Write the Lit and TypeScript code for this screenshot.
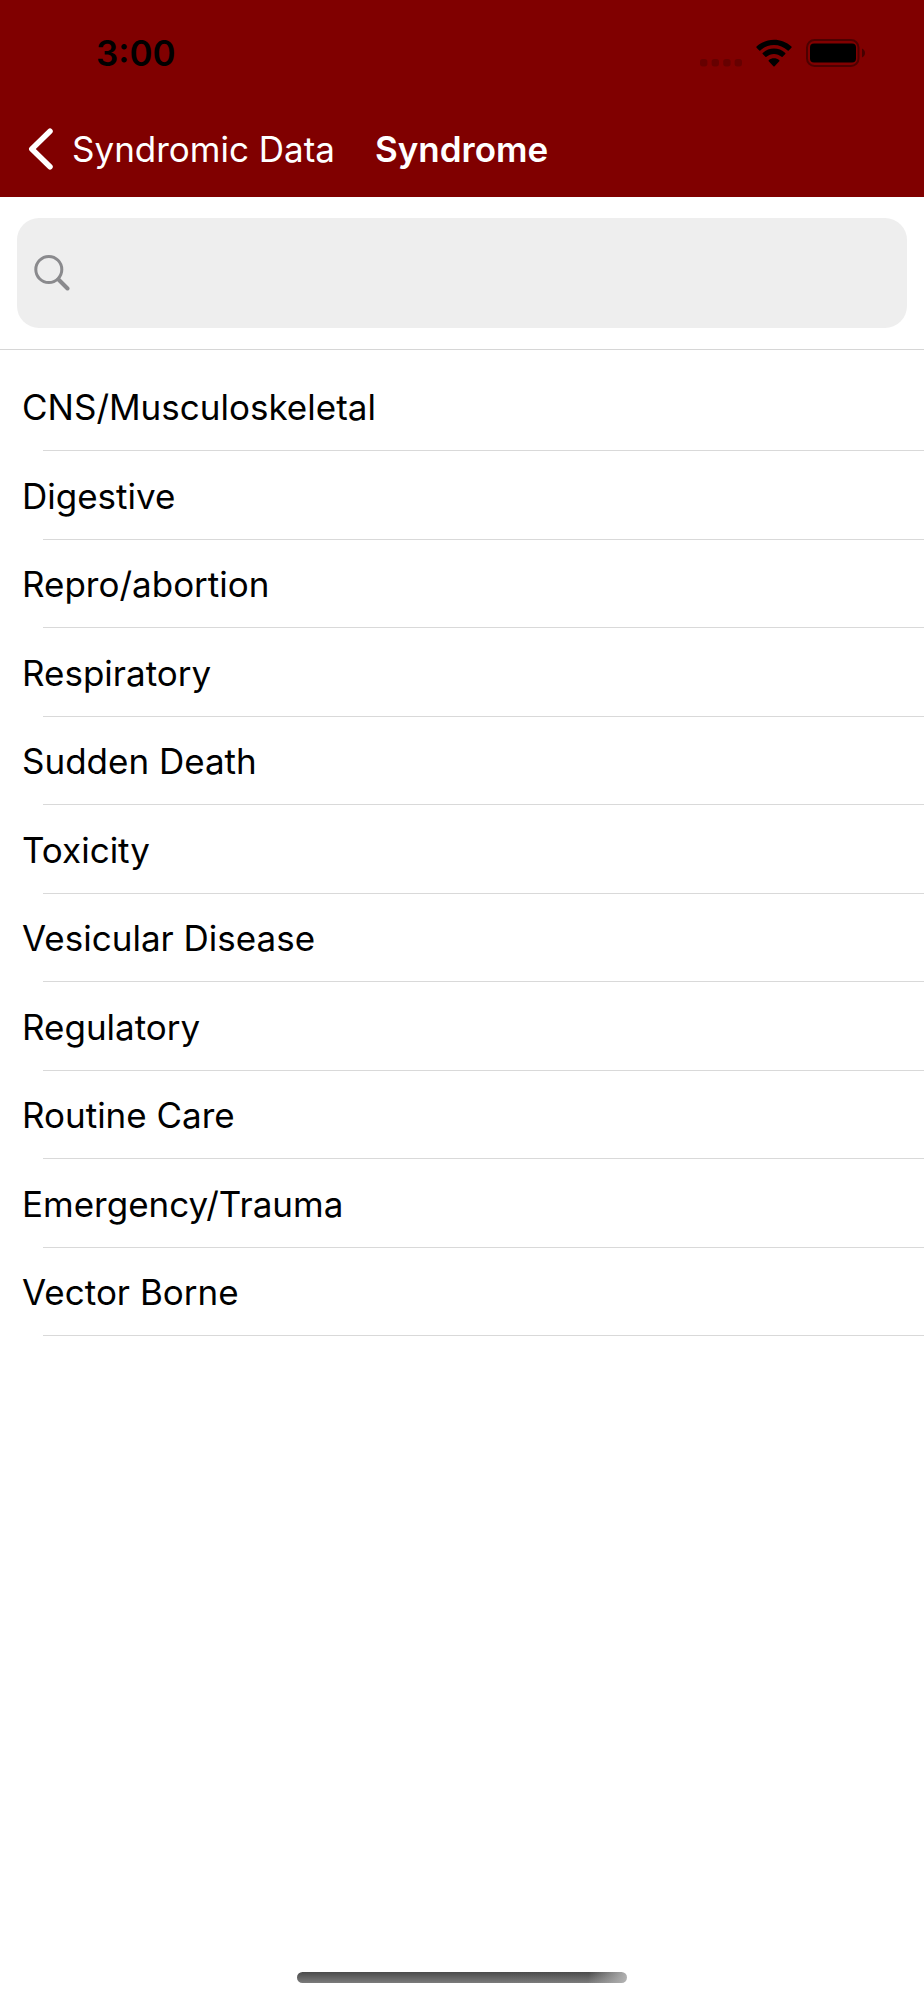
import { LitElement, html, css } from "lit";
import { customElement, state } from "lit/decorators.js";

const SYNDROMES = [
  "CNS/Musculoskeletal",
  "Digestive",
  "Repro/abortion",
  "Respiratory",
  "Sudden Death",
  "Toxicity",
  "Vesicular Disease",
  "Regulatory",
  "Routine Care",
  "Emergency/Trauma",
  "Vector Borne",
];

@customElement("status-bar")
class StatusBar extends LitElement {
  static styles = css`
    :host {
      display: flex;
      align-items: center;
      justify-content: space-between;
      height: 105px;
      padding: 0 59px 0 96px;
      color: #000;
    }
    .time {
      font-size: 35px;
      line-height: 44px;
      font-weight: 600;
    }
    .icons {
      display: flex;
      align-items: center;
      gap: 14px;
    }
    svg {
      display: block;
    }
  `;

  render() {
    return html`
      <span class="time">3:00</span>
      <div class="icons">
        <svg width="42" height="28" viewBox="0 0 42 28" aria-hidden="true">
          <g fill="#000" fill-opacity="0.2">
            <rect x="0" y="20" width="7.4" height="7.4" rx="2.6" />
            <rect x="11.6" y="20" width="7.4" height="7.4" rx="2.6" />
            <rect x="23.2" y="20" width="7.4" height="7.4" rx="2.6" />
            <rect x="34.6" y="20" width="7.4" height="7.4" rx="2.6" />
          </g>
        </svg>
        <svg width="36" height="28" viewBox="1 0 34 27" role="img" aria-label="Wi-Fi">
          <path d="M18 5.7c4.9 0 9.600 1.900 13.200 5.400.3.300.7.300 1 0l2.600-2.700c.3-.3.300-.8 0-1.100C25.500-1.500 10.500-1.500 1.200 7.300c-.3.300-.3.800 0 1.100l2.600 2.700c.3.300.7.300 1 0C8.400 7.600 13.100 5.700 18 5.700z" />
          <path d="M18 14.400c2.700 0 5.300 1 7.300 2.800.3.300.7.300 1 0l2.600-2.700c.3-.3.300-.8 0-1.100-6.200-5.700-15.600-5.700-21.800 0-.3.300-.3.800 0 1.100l2.600 2.700c.3.300.7.300 1 0 2-1.800 4.600-2.800 7.300-2.800z" />
          <path d="M23.100 21.500c.3-.3.300-.8 0-1.100-3-2.500-7.200-2.500-10.200 0-.3.300-.3.800 0 1.100l4.500 4.700c.4.400.8.400 1.200 0z" />
        </svg>
        <svg width="59" height="28" viewBox="0 0 59 28" role="img" aria-label="Battery full">
          <rect x="1" y="1" width="51.500" height="26" rx="7.500" fill="none" stroke="#000" stroke-opacity="0.4" stroke-width="2" />
          <rect x="4" y="4.500" width="46" height="19" rx="4" />
          <path d="M56 9.500c1.800.7 3 2.500 3 4.500s-1.200 3.800-3 4.500z" fill-opacity="0.45" />
        </svg>
      </div>
    `;
  }
}

@customElement("app-root")
class AppRoot extends LitElement {
  @state() private query = "";

  static styles = css`
    :host {
      display: flex;
      flex-direction: column;
      min-height: 100vh;
      background: #fff;
      color: #000;
      font-family: Inter, "Liberation Sans", sans-serif;
      font-size: 35px;
      line-height: 44px;
    }
    .header {
      padding-bottom: 4px;
      background: #800000;
      color: #fff;
    }
    .nav {
      display: flex;
      align-items: center;
      gap: 40px;
      height: 88px;
      padding: 0 28px;
    }
    .back {
      display: flex;
      align-items: center;
      gap: 18px;
      color: inherit;
      text-decoration: none;
    }
    .back svg,
    .search svg {
      display: block;
      flex: none;
    }
    .title {
      margin: 0;
      font-size: 35px;
      line-height: 44px;
      font-weight: 600;
    }
    .search-bar {
      padding: 21px 17px;
      border-bottom: 1px solid #d6d6d6;
    }
    .search {
      display: flex;
      align-items: center;
      gap: 16px;
      height: 110px;
      padding: 0 17px;
      border-radius: 22px;
      background: #eee;
    }
    .input {
      flex: 1;
      min-width: 0;
      padding: 0;
      border: 0;
      outline: 0;
      background: transparent;
      color: inherit;
      font: inherit;
    }
    .list {
      list-style: none;
      margin: 0;
      padding: 13px 0 0;
    }
    .item:nth-child(odd) {
      height: 88px;
    }
    .item:nth-child(even) {
      height: 89px;
    }
    .row {
      display: block;
      width: 100%;
      height: 100%;
      padding: 0 22px;
      border: 0;
      background: linear-gradient(#d9d9d9, #d9d9d9) 43px 100% / 100% 1px no-repeat;
      color: inherit;
      font: inherit;
      text-align: left;
    }
    .home {
      width: 330px;
      height: 11px;
      margin: auto auto 17px;
      border-radius: 6px;
      background:
        linear-gradient(100deg, transparent 88%, #b4b4b4 100%),
        linear-gradient(#4a4a4a, #7c7c7c);
    }
  `;

  render() {
    const q = this.query.trim().toLowerCase();
    const rows = SYNDROMES.filter((name) => name.toLowerCase().includes(q));
    return html`
      <header class="header">
        <status-bar></status-bar>
        <nav class="nav">
          <a class="back" href="#">
            <svg width="26" height="42" viewBox="0 0 26 42" aria-hidden="true">
              <path d="M22 3.200 3.800 21l18.200 17.800" fill="none" stroke="#fff" stroke-width="5.500" stroke-linecap="round" stroke-linejoin="round" />
            </svg>
            <span>Syndromic Data</span>
          </a>
          <h1 class="title">Syndrome</h1>
        </nav>
      </header>
      <div class="search-bar">
        <label class="search">
          <svg width="36" height="36" viewBox="0 0 36 36" aria-hidden="true">
            <g fill="none" stroke="#8a8a8d" stroke-linecap="round">
              <circle cx="14.800" cy="14.500" r="13" stroke-width="3" />
              <path d="M24.500 24.500 33.500 33.500" stroke-width="4" />
            </g>
          </svg>
          <input class="input" type="text" aria-label="Search" .value=${this.query}
            @input=${(e: Event) => (this.query = (e.target as HTMLInputElement).value)} />
        </label>
      </div>
      <ul class="list">
        ${rows.map((name) => html`<li class="item"><button class="row" type="button">${name}</button></li>`)}
      </ul>
      <div class="home"></div>
    `;
  }
}
